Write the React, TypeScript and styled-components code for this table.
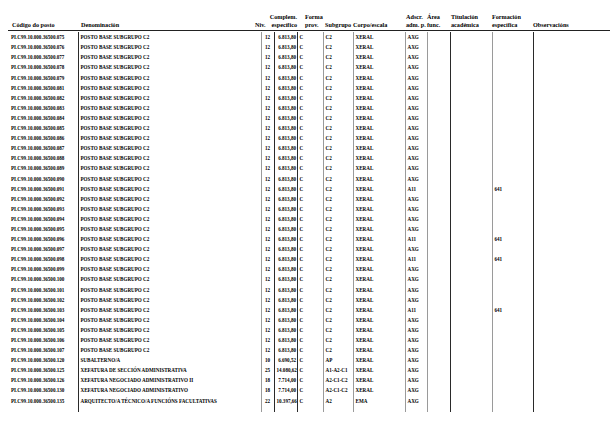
import React from "react";
import styled, { createGlobalStyle } from "styled-components";

const Global = createGlobalStyle`
  html, body { margin: 0; padding: 0; background: #ffffff; }
  body { font-family: "Liberation Serif", "DejaVu Serif", serif; color: #000; }
`;

const Page = styled.div`
  width: 615px;
  height: 439px;
  overflow: hidden;
  background: #fff;
`;

const HeaderGrid = styled.div`
  display: grid;
  grid-template-columns: 69px 174px 17px 26px 27px 28px 53px 21px 24px 41px 41px 77px;
  padding-top: 12.5px;
  padding-left: 12px;
`;

const HeaderCell = styled.div<{ $right?: boolean; $pad?: number }>`
  display: flex;
  flex-direction: column;
  justify-content: flex-end;
  align-items: ${(p) => (p.$right ? "flex-end" : "flex-start")};
  padding-left: ${(p) => p.$pad ?? 0}px;
  padding-right: ${(p) => (p.$right ? 1 : 0)}px;
  font-size: 6.2px;
  font-weight: bold;
  line-height: 8.6px;
  white-space: nowrap;
`;

const Rule = styled.div`
  margin-left: 8px;
  width: 602px;
  border-top: 1px solid #222;
  margin-top: 0.5px;
`;

const Body = styled.div`
  margin-left: 8px;
  padding-top: 1px;
`;

const Row = styled.div`
  display: grid;
  grid-template-columns: 70px 183px 13px 23px 26px 30px 52px 22px 23px 42px 41px 77px;
  height: 10.1px;
`;

const Cell = styled.div<{ $line?: "dark" | "light"; $right?: boolean; $pad?: number }>`
  border-left: ${(p) =>
    p.$line ? `1px solid ${p.$line === "dark" ? "#2a2a2a" : "#9a9a9a"}` : "none"};
  padding-left: ${(p) => p.$pad ?? 1.5}px;
  padding-right: ${(p) => (p.$right ? 1 : 0)}px;
  text-align: ${(p) => (p.$right ? "right" : "left")};
  font-size: 5.1px;
  font-weight: bold;
  line-height: 10.1px;
  white-space: nowrap;
  overflow: visible;
`;

const Tail = styled.div`
  display: grid;
  grid-template-columns: 70px 183px 13px 23px 26px 30px 52px 22px 23px 42px 41px 77px;
  height: 6px;
`;

type Rec = {
  code: string;
  den: string;
  niv: string;
  comp: string;
  forma: string;
  sub: string;
  corpo: string;
  adscr: string;
  form: string;
};

const base = (n: string, a11 = false): Rec => ({
  code: `PI.C99.10.000.36500.${n}`,
  den: "POSTO BASE SUBGRUPO C2",
  niv: "12",
  comp: "6.813,80",
  forma: "C",
  sub: "C2",
  corpo: "XERAL",
  adscr: a11 ? "A11" : "AXG",
  form: a11 ? "641" : "",
});

const nums = [
  "075", "076", "077", "078", "079", "081", "082", "083", "084", "085", "086",
  "087", "088", "089", "090", "091", "092", "093", "094", "095", "096", "097",
  "098", "099", "100", "101", "102", "103", "104", "105", "106", "107",
];
const a11set = new Set(["091", "096", "098", "103"]);

const rows: Rec[] = [
  ...nums.map((n) => base(n, a11set.has(n))),
  { code: "PI.C99.10.000.36500.120", den: "SUBALTERNO/A", niv: "10", comp: "6.690,52", forma: "C", sub: "AP", corpo: "XERAL", adscr: "AXG", form: "" },
  { code: "PI.C99.10.000.36500.125", den: "XEFATURA DE SECCIÓN ADMINISTRATIVA", niv: "25", comp: "14.080,62", forma: "C", sub: "A1-A2-C1", corpo: "XERAL", adscr: "AXG", form: "" },
  { code: "PI.C99.10.000.36500.126", den: "XEFATURA NEGOCIADO ADMINISTRATIVO II", niv: "18", comp: "7.714,00", forma: "C", sub: "A2-C1-C2", corpo: "XERAL", adscr: "AXG", form: "" },
  { code: "PI.C99.10.000.36500.130", den: "XEFATURA NEGOCIADO ADMINISTRATIVO", niv: "18", comp: "7.714,00", forma: "C", sub: "A2-C1-C2", corpo: "XERAL", adscr: "AXG", form: "" },
  { code: "PI.C99.10.000.36500.135", den: "ARQUITECTO/A TÉCNICO/A FUNCIÓNS FACULTATIVAS", niv: "22", comp: "10.397,66", forma: "C", sub: "A2", corpo: "EMA", adscr: "AXG", form: "" },
];

const lines: ("dark" | "light")[] = [
  "dark", "light", "dark", "dark", "light", "light", "light", "light", "dark", "light", "dark",
];

export default function App() {
  return (
    <Page>
      <Global />
      <HeaderGrid>
        <HeaderCell>Código do posto</HeaderCell>
        <HeaderCell>Denominación</HeaderCell>
        <HeaderCell>Niv.</HeaderCell>
        <HeaderCell $right>
          <span>Complem.</span>
          <span>específico</span>
        </HeaderCell>
        <HeaderCell $pad={7}>
          <span>Forma</span>
          <span>prov.</span>
        </HeaderCell>
        <HeaderCell>Subgrupo</HeaderCell>
        <HeaderCell>Corpo/escala</HeaderCell>
        <HeaderCell>
          <span>Adscr.</span>
          <span>adm. p.</span>
        </HeaderCell>
        <HeaderCell>
          <span>Área</span>
          <span>func.</span>
        </HeaderCell>
        <HeaderCell>
          <span>Titulación</span>
          <span>académica</span>
        </HeaderCell>
        <HeaderCell>
          <span>Formación</span>
          <span>específica</span>
        </HeaderCell>
        <HeaderCell>Observacións</HeaderCell>
      </HeaderGrid>
      <Rule />
      <Body>
        {rows.map((r) => (
          <Row key={r.code}>
            <Cell $pad={3}>{r.code}</Cell>
            <Cell $line={lines[0]}>{r.den}</Cell>
            <Cell $line={lines[1]} $pad={3}>{r.niv}</Cell>
            <Cell $line={lines[2]} $right>{r.comp}</Cell>
            <Cell $line={lines[3]}>{r.forma}</Cell>
            <Cell $line={lines[4]}>{r.sub}</Cell>
            <Cell $line={lines[5]}>{r.corpo}</Cell>
            <Cell $line={lines[6]}>{r.adscr}</Cell>
            <Cell $line={lines[7]} />
            <Cell $line={lines[8]} />
            <Cell $line={lines[9]}>{r.form}</Cell>
            <Cell $line={lines[10]} />
          </Row>
        ))}
        <Tail>
          <Cell />
          {lines.map((l, i) => (
            <Cell key={i} $line={l} />
          ))}
        </Tail>
      </Body>
    </Page>
  );
}
